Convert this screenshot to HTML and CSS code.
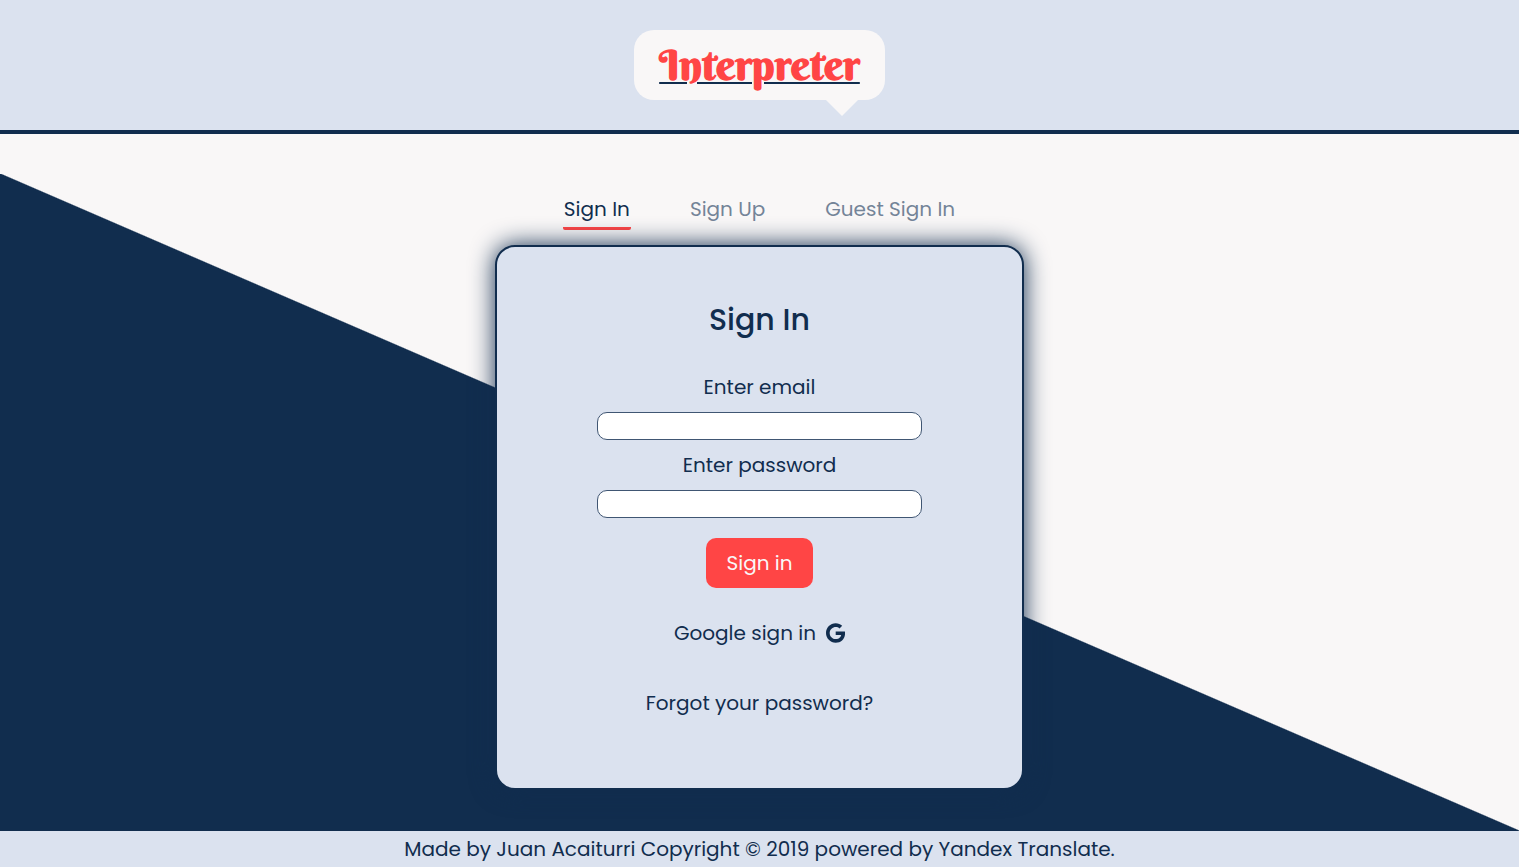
FILE: index.html
```html
<!DOCTYPE html>
<html lang="en">
<head>
<meta charset="utf-8">
<title>Interpreter</title>
<link rel="stylesheet" href="styles.css">
</head>
<body>
<header class="header">
  <h1 class="bubble"><a class="logo" href="#">Interpreter</a></h1>
</header>
<main class="main">
  <nav class="tabs">
    <a class="tab tab-active" href="#signin">Sign In</a>
    <a class="tab" href="#signup">Sign Up</a>
    <a class="tab" href="#guest">Guest Sign In</a>
  </nav>
  <form class="card">
    <h2 class="title">Sign In</h2>
    <label class="label" for="email">Enter email</label>
    <input class="field" id="email" type="email">
    <label class="label" for="password">Enter password</label>
    <input class="field" id="password" type="password">
    <button class="submit" type="submit">Sign in</button>
    <a class="link" href="#google">Google sign in
      <svg class="google" viewBox="0 0 488 512" aria-hidden="true"><path fill="currentColor" d="M488 261.8C488 403.3 391.1 504 248 504 110.8 504 0 393.2 0 256S110.8 8 248 8c66.8 0 123 24.5 166.3 64.9l-67.5 64.9C258.5 52.6 94.3 116.6 94.3 256c0 86.5 69.1 156.6 153.7 156.6 98.2 0 135-70.4 140.8-106.9H248v-85.3h236.1c2.3 12.7 3.9 24.9 3.9 41.4z"/></svg>
    </a>
    <a class="link" href="#forgot">Forgot your password?</a>
  </form>
</main>
<footer class="footer">Made by Juan Acaiturri Copyright © 2019 powered by Yandex Translate.</footer>
</body>
</html>
```
FILE: styles.css
```css
:root {
  --navy: #112d4e;
  --pale: #dbe2ef;
  --light: #f9f7f7;
  --red: #ff4545;
}
* { box-sizing: border-box; margin: 0; }
body {
  display: flex;
  flex-direction: column;
  min-height: 100vh;
  background: var(--light);
  color: var(--navy);
  font: 20px/30px Poppins, Inter, sans-serif;
}
a { color: inherit; text-decoration: none; }
.header {
  display: flex;
  justify-content: center;
  padding: 30px;
  background: var(--pale);
  border-bottom: 4px solid var(--navy);
}
.bubble {
  position: relative;
  padding: 10px 25px;
  background: var(--light);
  border-radius: 20px;
  font: bold 42px/50px "Berkshire Swash", "Liberation Serif", serif;
}
.bubble::after {
  content: "";
  position: absolute;
  top: 100%;
  right: 27px;
  border: 16px solid transparent;
  border-top-color: var(--light);
  border-bottom: 0;
}
.logo {
  color: var(--red);
  text-decoration: underline 2px var(--navy);
  text-underline-offset: 2px;
}
.main {
  flex: 1;
  display: flex;
  flex-direction: column;
  align-items: center;
  padding: 60px 20px 41px;
  background: linear-gradient(to top right, var(--navy) 50%, transparent 50.1%) bottom / 100% calc(100% - 40px) no-repeat;
}
.tabs {
  display: flex;
  gap: 58px;
  margin-bottom: 15px;
}
.tab {
  padding: 0 1px 3px;
  border-bottom: 3px solid transparent;
  border-radius: 2px;
  color: #748498;
}
.tab-active {
  color: var(--navy);
  border-bottom-color: var(--red);
}
.card {
  display: flex;
  flex-direction: column;
  align-items: center;
  width: 100%;
  max-width: 529px;
  padding: 50px 20px 70px;
  background: var(--pale);
  border: 2px solid var(--navy);
  border-radius: 20px;
  box-shadow: 0 0 25px var(--navy);
}
.title {
  margin-bottom: 30px;
  font-size: 30px;
  line-height: 45px;
  font-weight: 500;
}
.field {
  width: 67%;
  height: 28px;
  margin: 10px 0;
  padding: 0 10px;
  background: #fff;
  border: 1px solid #405673;
  border-radius: 10px;
  color: inherit;
  font: inherit;
}
.submit {
  margin: 10px 0 30px;
  padding: 10px 20px;
  background: var(--red);
  border: 0;
  border-radius: 10px;
  color: var(--light);
  font: inherit;
}
.link {
  display: flex;
  align-items: center;
  gap: 10px;
}
.link + .link { margin-top: 40px; }
.google { height: 20px; }
.footer {
  padding: 3px 20px;
  background: var(--pale);
  text-align: center;
}
```
